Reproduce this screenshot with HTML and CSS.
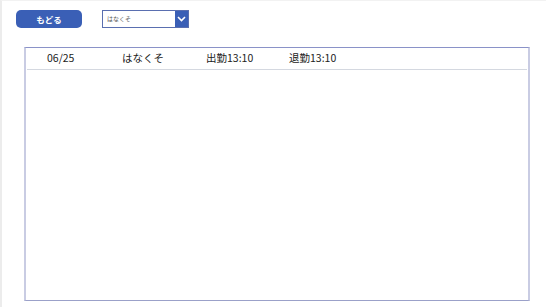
FILE: index.html
```html
<!DOCTYPE html>
<html lang="ja">
<head>
<meta charset="utf-8">
<link rel="stylesheet" href="styles.css">
</head>
<body>
<div class="page">
  <div class="toolbar">
    <button class="back">もどる</button>
    <div class="select">
      <span class="select-text">はなくそ</span>
      <span class="select-btn">
        <svg width="9" height="6" viewBox="0 0 9 6"><path d="M1 1 L4.5 4.5 L8 1" fill="none" stroke="#fff" stroke-width="1.6"/></svg>
      </span>
    </div>
  </div>
  <div class="gallery">
    <div class="row">
      <span class="c1">06/25</span>
      <span class="c2">はなくそ</span>
      <span class="c3">出勤13:10</span>
      <span class="c4">退勤13:10</span>
    </div>
  </div>
</div>
</body>
</html>
```
FILE: styles.css
```css
html, body { margin: 0; padding: 0; background: #fff; }
body { width: 546px; height: 307px; overflow: hidden; font-family: "Noto Sans CJK JP", "Open Sans", sans-serif; }
.page {
  height: 307px;
  box-sizing: border-box;
  border-left: 2px solid #ececec;
  border-top: 1px solid #f2f2f2;
  padding: 9px 0 0 14px;
}
.toolbar { display: flex; align-items: center; height: 18px; }
.back {
  width: 66px; height: 18px;
  background: #3a5fb6;
  border: none;
  border-radius: 5px;
  color: #fff;
  font-family: "Noto Sans CJK JP", sans-serif;
  font-weight: bold;
  font-size: 8.5px;
  padding: 0;
  line-height: 18px;
}
.select {
  margin-left: 20px;
  width: 87px; height: 18px;
  box-sizing: border-box;
  border: 1px solid #5a6fb0;
  display: flex;
  align-items: stretch;
}
.select-text {
  flex: 1;
  font-size: 6px;
  color: #555;
  line-height: 16px;
  padding-left: 4px;
}
.select-btn {
  width: 13px;
  background: #3a5fb6;
  display: flex; align-items: center; justify-content: center;
}
.gallery {
  margin: 19px 0 0 8px;
  width: 506px; height: 254px;
  box-sizing: border-box;
  border-top: 1px solid #8a92c8;
  border-bottom: 1px solid #9ba1c9;
  border-left: 2px solid #c9cce3;
  border-right: 2px solid #c9cce3;
  padding: 0 1px;
}
.row {
  height: 21px;
  border-bottom: 1px solid #d4d8e0;
  position: relative;
  font-size: 10.5px;
  color: #222;
  font-family: "Noto Sans CJK JP", "Open Sans", sans-serif;
}
.row span { position: absolute; top: 3px; line-height: 14px; }
.c1 { left: 20px; }
.c2 { left: 95px; }
.c3 { left: 179px; }
.c4 { left: 262px; }
```
